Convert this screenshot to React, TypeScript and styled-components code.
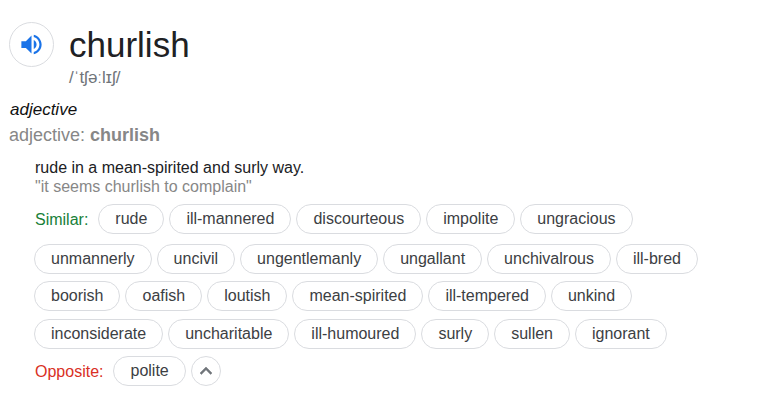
import React from "react";
import styled, { createGlobalStyle } from "styled-components";

const GlobalStyle = createGlobalStyle`
  * { box-sizing: border-box; }
  body {
    margin: 0;
    background: #fff;
    color: #202124;
    font-family: "Liberation Sans", Arial, sans-serif;
    font-size: 16px;
    line-height: 19px;
  }
`;

const Entry = styled.main`
  padding: 22px 10px 24px 9px;
`;

const Header = styled.header`
  display: flex;
  align-items: flex-start;
  gap: 15px;
`;

const SpeakButton = styled.button`
  display: flex;
  align-items: center;
  justify-content: center;
  flex: none;
  width: 45px;
  height: 45px;
  padding: 0;
  border: 1px solid #dadce0;
  border-radius: 50%;
  background: #fff;
  cursor: pointer;
`;

const Headword = styled.h1`
  margin: 0;
  font-size: 35px;
  font-weight: 400;
  line-height: 46px;
`;

const Phonetic = styled.div`
  font-size: 17px;
  line-height: 19px;
  color: #70757a;
`;

const PartOfSpeech = styled.div`
  margin-top: 13px;
  padding-left: 1px;
  color: #111;
  font-size: 17px;
  line-height: 20px;
  font-style: italic;
`;

const Forms = styled.div`
  margin-top: 5px;
  font-size: 18px;
  line-height: 21px;
  color: #878787;
`;

const Sense = styled.section`
  margin: 12px 0 0 25px;
`;

const Definition = styled.p`
  margin: 0;
  padding-left: 1px;
`;

const Example = styled(Definition)`
  color: #878787;
`;

const WordRow = styled.div<{ $top: number }>`
  display: flex;
  flex-wrap: wrap;
  align-items: center;
  gap: 5px;
  margin-top: ${(p) => p.$top}px;
`;

const Label = styled.span<{ $color: string }>`
  padding: 0 5px 0 1px;
  color: ${(p) => p.$color};
`;

const Chip = styled.button`
  height: 30px;
  padding: 0 16px 2px;
  border: 1px solid #dadce0;
  border-radius: 15px;
  background: #fff;
  color: #3c4043;
  font: inherit;
  cursor: pointer;
`;

const CollapseButton = styled(Chip)`
  display: flex;
  align-items: center;
  justify-content: center;
  width: 30px;
  padding: 0;
`;

const similar = [
  { top: 8, label: "Similar:", words: ["rude", "ill-mannered", "discourteous", "impolite", "ungracious"] },
  { top: 10, words: ["unmannerly", "uncivil", "ungentlemanly", "ungallant", "unchivalrous", "ill-bred"] },
  { top: 7, words: ["boorish", "oafish", "loutish", "mean-spirited", "ill-tempered", "unkind"] },
  { top: 8, words: ["inconsiderate", "uncharitable", "ill-humoured", "surly", "sullen", "ignorant"] },
];

export default function App() {
  return (
    <>
      <GlobalStyle />
      <Entry>
        <Header>
          <SpeakButton aria-label="Listen to pronunciation">
            <svg width="27" height="27" viewBox="0 0 24 24" fill="#1a73e8" aria-hidden="true">
              <path d="M3 9v6h4l5 5V4L7 9H3zm13.5 3c0-1.77-1.02-3.29-2.5-4.03v8.05c1.48-.73 2.5-2.25 2.5-4.02zM14 3.23v2.06c2.89.86 5 3.54 5 6.71s-2.11 5.85-5 6.71v2.06c4.01-.91 7-4.49 7-8.77s-2.99-7.86-7-8.77z" />
            </svg>
          </SpeakButton>
          <div>
            <Headword>churlish</Headword>
            <Phonetic>/ˈtʃəːlɪʃ/</Phonetic>
          </div>
        </Header>
        <PartOfSpeech>adjective</PartOfSpeech>
        <Forms>
          adjective: <b>churlish</b>
        </Forms>
        <Sense>
          <Definition>rude in a mean-spirited and surly way.</Definition>
          <Example>"it seems churlish to complain"</Example>
          {similar.map((row) => (
            <WordRow key={row.words[0]} $top={row.top}>
              {row.label && <Label $color="#188038">{row.label}</Label>}
              {row.words.map((word) => (
                <Chip key={word}>{word}</Chip>
              ))}
            </WordRow>
          ))}
          <WordRow $top={7}>
            <Label $color="#d93025">Opposite:</Label>
            <Chip>polite</Chip>
            <CollapseButton aria-label="Show less">
              <svg width="24" height="24" viewBox="0 0 24 24" fill="#70757a" stroke="#70757a" strokeWidth="0.5" aria-hidden="true">
                <path d="M12 8l-6 6 1.41 1.41L12 10.83l4.59 4.58L18 14z" />
              </svg>
            </CollapseButton>
          </WordRow>
        </Sense>
      </Entry>
    </>
  );
}
